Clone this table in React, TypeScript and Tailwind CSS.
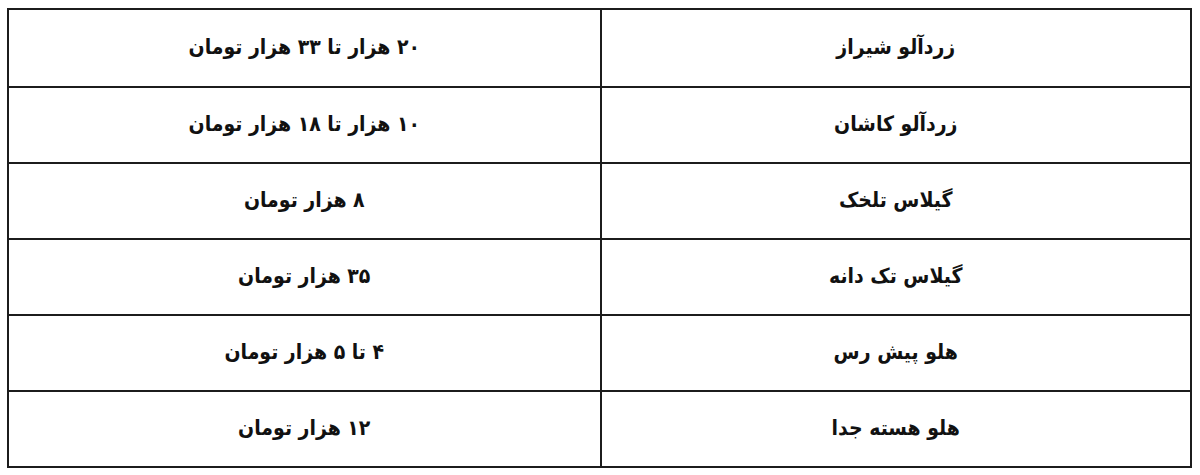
const rows: [string, string][] = [
  ["زردآلو شیراز", "۲۰ هزار تا ۳۳ هزار تومان"],
  ["زردآلو کاشان", "۱۰ هزار تا ۱۸ هزار تومان"],
  ["گیلاس تلخک", "۸ هزار تومان"],
  ["گیلاس تک دانه", "۳۵ هزار تومان"],
  ["هلو پیش رس", "۴ تا ۵ هزار تومان"],
  ["هلو هسته جدا", "۱۲ هزار تومان"],
];

export default function App() {
  return (
    <div className="w-[1200px] h-[475px] bg-white pt-[8px] pl-[7px]">
      <div
        dir="rtl"
        className="w-[1185px] border-2 border-[#1c1c1c] font-['DejaVu_Sans_Condensed','DejaVu_Sans',sans-serif] text-[#111]"
      >
        {rows.map(([name, price], i) => (
          <div
            key={i}
            className={`grid grid-cols-2 h-[76px] ${i > 0 ? "border-t-2 border-[#1c1c1c]" : ""}`}
          >
            <div className="flex items-center justify-center border-l-2 border-[#1c1c1c] text-[21px] font-bold">
              {name}
            </div>
            <div className="flex items-center justify-center text-[21px] font-bold">
              {price}
            </div>
          </div>
        ))}
      </div>
    </div>
  );
}
